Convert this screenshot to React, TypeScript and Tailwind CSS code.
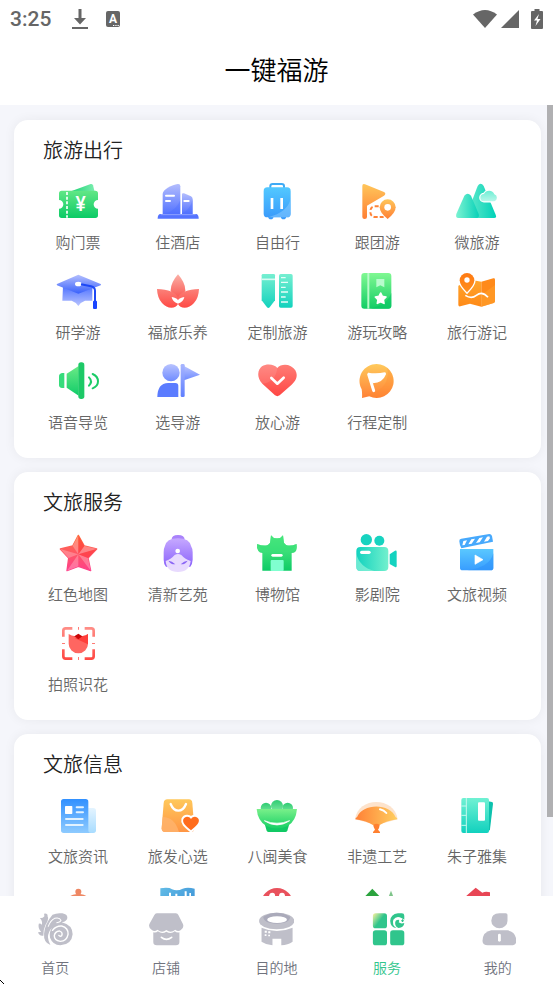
import type { ReactNode } from "react";

type GradProps = { id: string; from: string; to: string; dir?: "down" | "right" | "diag" };

function Grad({ id, from, to, dir = "down" }: GradProps) {
  return (
    <linearGradient id={id} x1="0" y1="0" x2={dir === "down" ? "0" : "1"} y2={dir === "right" ? "0" : "1"}>
      <stop offset="0" stopColor={from} />
      <stop offset="1" stopColor={to} />
    </linearGradient>
  );
}

function Icon({ box, children }: { box: string; children: ReactNode }) {
  return (
    <svg viewBox={box} className="h-10 w-12" fill="none" aria-hidden="true">
      {children}
    </svg>
  );
}

const ticket = (
  <Icon box="69 21 144 120">
    <Grad id="tk" from="#62e786" to="#0bcb66" />
    <Grad id="tkb" from="#0fce6c" to="#7deeb0" dir="right" />
    <path d="M112 52L179 27q5-1 7 4l6 24z" fill="url(#tkb)" />
    <path d="M92 47H193a8 8 0 0 1 8 8V75a13 13 0 0 0 0 26V121a8 8 0 0 1-8 8H92a8 8 0 0 1-8-8V101a13 13 0 0 0 0-26V55a8 8 0 0 1 8-8z" fill="url(#tk)" />
    <path d="M108 51V128" stroke="#fff" strokeWidth="5" strokeDasharray="9 5" />
    <text x="149" y="108" textAnchor="middle" fontSize="58" fontWeight="500" fontFamily="Roboto, sans-serif" fill="#fff">¥</text>
  </Icon>
);

const hotel = (
  <Icon box="370 21 144 120">
    <Grad id="ho" from="#b3bdfd" to="#5473ff" />
    <path d="M396 117V57C396 42 425 30 441 27q8-1 8 7V117z" fill="url(#ho)" />
    <path d="M454 58q0-5 6-3l21 9q5 3 5 8V117H454z" fill="url(#ho)" />
    <path d="M449 74Q440 104 402 117H449z M486 72Q480 102 454 116V117H486z" fill="#4b6cff" opacity=".35" />
    <path d="M388 117H497q7 2 7 14H381q0-12 7-14z" fill="#5573ff" />
    <path d="M390 119H495" stroke="#8fa2ff" strokeWidth="3" />
    <path d="M406 62H430M406 78H418M461 78H474" stroke="#fff" strokeWidth="6" strokeLinecap="round" />
  </Icon>
);

const suitcase = (
  <Icon box="670 21 144 120">
    <Grad id="su" from="#52c8ff" to="#3a9bfb" />
    <path d="M722 40V33q0-6 7-6H756q7 0 7 6V40" stroke="#3eaaf5" strokeWidth="6" />
    <path d="M716 124h15v5l-4 4h-7l-4-4zM754 124h15v5l-4 4h-7l-4-4z" fill="#3a9bfb" />
    <rect x="702" y="37" width="81" height="90" rx="11" fill="url(#su)" />
    <path d="M783 70Q775 112 715 127H772q11 0 11-11z" fill="#86cbff" opacity=".55" />
    <path d="M727 69V102M756 69V102" stroke="#fff" strokeWidth="8" />
  </Icon>
);

const groupTour = (
  <Icon box="191 21 144 120">
    <Grad id="gt" from="#ffc65a" to="#ff7f34" />
    <path d="M219 33q0-8 8-5L284 51q8 5 0 11L233 92V126q0 6-7 6t-7-6z" fill="url(#gt)" />
    <path d="M268 94H256q-13 1-13 16t15 16H296" stroke="#ff8236" strokeWidth="6" strokeDasharray="12 6" />
    <path d="M295 132Q271 113 271 97a24 24 0 0 1 48 0Q319 113 295 132z" fill="url(#gt)" stroke="#fff" strokeWidth="5" paintOrder="stroke" />
    <circle cx="295" cy="97" r="10" fill="#fff" />
  </Icon>
);

const mountains = (
  <Icon box="492 21 144 120">
    <Grad id="mo1" from="#55e6c8" to="#00d1b8" dir="right" />
    <Grad id="mo2" from="#7cf3d2" to="#08d1b8" dir="right" />
    <Grad id="mo3" from="#6feed4" to="#b8f7ea" />
    <path d="M548 80L566 33q9-13 18 0L620 119q4 10-5 10H550z" fill="url(#mo1)" />
    <path d="M502 117L526 62q10-12 20 0L569 117q3 12-7 12H508q-9 0-6-12z" fill="url(#mo2)" />
    <path d="M585 79a11 11 0 0 1 0-22a17 17 0 0 1 31 1a11 11 0 0 1 0 21z" fill="url(#mo3)" stroke="#fff" strokeWidth="7" paintOrder="stroke" />
  </Icon>
);

const gradCap = (
  <Icon box="69 21 144 120">
    <Grad id="gc1" from="#b4bffe" to="#3961fb" />
    <Grad id="gc2" from="#4f73ff" to="#b9c4ff" />
    <path d="M96 64L94 107H122Q136 112 142 123Q148 112 162 107H184V64z" fill="url(#gc2)" />
    <path d="M78 57L142 29L209 57q2 2 0 4L146 85q-4 2-8 0L78 61q-2-2 0-4z" fill="url(#gc1)" />
    <ellipse cx="142" cy="57" rx="10" ry="7" fill="#fff" />
    <path d="M150 58L180 64Q192 67 192 77V110" stroke="#1d48f5" strokeWidth="6" />
    <rect x="186" y="107" width="12" height="25" rx="3" fill="#1a45ff" />
  </Icon>
);

const lotus = (
  <Icon box="370 21 144 120">
    <Grad id="lo1" from="#fb8179" to="#ff4a45" />
    <Grad id="lo2" from="#fbb0a6" to="#f9504b" />
    <path d="M442 28Q420 53 420 76Q426 100 442 106Q458 100 464 76Q464 53 442 28z" fill="url(#lo2)" />
    <path d="M379 72C412 72 438 84 442 98C446 84 472 72 505 72Q504 99 490 114C475 133 448 132 442 117C436 132 409 133 394 114Q380 99 379 72z" fill="url(#lo1)" />
    <path d="M423 96Q438 98 442 106Q446 98 461 96Q459 110 442 116Q425 110 423 96z" fill="#fff" />
  </Icon>
);

const penRuler = (
  <Icon box="670 21 144 120">
    <Grad id="pr" from="#76efd1" to="#12d2bd" />
    <path d="M696 31q0-4 4-4H732q4 0 4 4V106L720 127q-4 4-8 0L696 106z" fill="url(#pr)" />
    <path d="M696 43H736" stroke="#d6fbf2" strokeWidth="5" />
    <rect x="748" y="27" width="41" height="101" rx="5" fill="url(#pr)" />
    <path d="M754 38H768M754 52H775M754 67H768M754 81H775M754 96H768M754 111H775" stroke="#e6fdf8" strokeWidth="4" />
  </Icon>
);

const guideBook = (
  <Icon box="191 21 144 120">
    <Grad id="gb" from="#80f892" to="#12cd65" />
    <rect x="216" y="24" width="90" height="107" rx="9" fill="url(#gb)" />
    <path d="M306 84Q294 118 243 131H297q9 0 9-9z" fill="#08c764" opacity=".6" />
    <path d="M237 24V131" stroke="#b7fbc8" strokeWidth="6" />
    <path d="M261 42H285V67L273 61L261 67z" fill="#b9fbcd" />
    <path d="M274 84L279 94L290 96L282 104L284 115L274 110L264 115L266 104L258 96L269 94z" fill="#fff" stroke="#fff" strokeWidth="5" strokeLinejoin="round" />
  </Icon>
);

const travelMap = (
  <Icon box="492 21 144 120">
    <Grad id="tm" from="#ffa62d" to="#ff8a17" />
    <Grad id="tmp" from="#ff7a12" to="#ff8f1d" />
    <path d="M508 62L545 44L577 50V125L543 116L514 124q-6 1-6-5z" fill="url(#tm)" />
    <path d="M577 50L613 40q5-1 5 4V109q0 4-4 5L577 125z" fill="#ff8a1a" />
    <path d="M577 90L618 60V109q0 4-4 5L577 125z" fill="#ff9c2a" opacity=".7" />
    <path d="M534 82Q512 60 512 46a22 22 0 0 1 44 0Q556 60 534 82z" fill="url(#tmp)" stroke="#fff" strokeWidth="8" paintOrder="stroke" />
    <circle cx="534" cy="45" r="8" fill="#fff" />
    <path d="M529 91Q547 103 562 91Q580 77 597 97" stroke="#fff" strokeWidth="5" />
  </Icon>
);

const speaker = (
  <Icon box="69 21 144 120">
    <Grad id="sp" from="#6bea86" to="#10cc69" />
    <path d="M100 54H93q-9 2-9 10V90q0 8 9 9H100z" fill="#35dc7b" />
    <path d="M107 56L143 33V122L107 98z" fill="url(#sp)" />
    <rect x="142" y="22" width="18" height="110" rx="8" fill="#1dc967" />
    <path d="M174 67Q186 79 174 92M185 57Q201 64 201 79T185 100" stroke="#1ccc68" strokeWidth="6" strokeLinecap="round" />
  </Icon>
);

const tourGuide = (
  <Icon box="370 21 144 120">
    <Grad id="tg" from="#b8c3ff" to="#6f8bff" />
    <Grad id="tgf" from="#a8b6ff" to="#5f7fff" />
    <circle cx="421" cy="53" r="26" fill="url(#tg)" />
    <path d="M380 126C380 101 390 84 413 84H434q9 0 9 9V126z" fill="#5b7cff" />
    <path d="M460 33L508 59L460 76z" fill="url(#tg)" />
    <rect x="450" y="27" width="12" height="99" rx="4" fill="url(#tgf)" />
  </Icon>
);

const heart = (
  <Icon box="670 21 144 120">
    <Grad id="he" from="#ff7d76" to="#ff4744" />
    <path d="M743 39C755 24 785 26 797 46C808 66 795 81 785 90L750 121q-7 5-14 0L698 86C680 68 684 44 697 34C712 24 735 28 743 39z" fill="url(#he)" />
    <path d="M743 39C735 28 712 24 697 34C684 44 680 68 698 86Q738 82 743 39z" fill="#fff" opacity=".1" />
    <path d="M725 69L743 86L762 68" stroke="#fff" strokeWidth="8" strokeLinecap="round" strokeLinejoin="round" />
  </Icon>
);

const itinerary = (
  <Icon box="971 21 144 120">
    <Grad id="it" from="#ffca5c" to="#ff8136" />
    <path d="M1042 27a51 51 0 1 1-22 97L998 129q1-14-1-26A51 51 0 0 1 1042 27z" fill="url(#it)" />
    <path d="M1074 39Q1084 104 1010 119L1020 124A51 51 0 0 0 1074 39z" fill="#ff8a30" opacity=".3" />
    <path d="M1018 58L1033 107" stroke="#fff" strokeWidth="9" strokeLinecap="round" />
    <path d="M1016 53Q1042 57 1066 52Q1071 52 1070 58Q1060 84 1031 85L1026 80L1018 60z" fill="#fff" />
  </Icon>
);

const redStar = (
  <Icon box="69 27 144 120">
    <Grad id="rs" from="#ff6f3f" to="#ff3f8a" />
    <path d="M142 31L160 63L197 72L171 99L179 137L142 124L108 137L113 99L88 72L125 63z" fill="url(#rs)" stroke="url(#rs)" strokeWidth="4" strokeLinejoin="round" />
    <path d="M142 88V31L125 63zM142 88L88 72L113 99zM142 88L108 137L142 124zM142 88L179 137L171 99zM142 88L197 72L160 63z" fill="#fff" opacity=".25" />
    <path d="M142 88L197 72L171 99zM142 88V31L160 63z" fill="#ff2222" opacity=".35" />
  </Icon>
);

const artGarden = (
  <Icon box="370 27 144 120">
    <Grad id="ag" from="#c6a9ff" to="#8b63fb" />
    <path d="M423 45Q422 30 442 30T462 45z" fill="#a982fb" />
    <path d="M402 65Q407 40 442 40T482 65Q486 70 486 82V104Q485 118 479 125H406Q399 118 399 104V82Q399 70 402 65z" fill="url(#ag)" />
    <path d="M405 108Q420 104 432 90Q442 84 452 90Q464 104 480 108Q476 141 442 141T405 108z" fill="#e8dafe" />
    <path d="M413 107Q424 108 434 118Q420 119 413 107zM471 107Q460 108 450 118Q464 119 471 107z" fill="#8b66f5" />
    <circle cx="441" cy="78" r="7" fill="#fff" />
  </Icon>
);

const museum = (
  <Icon box="670 27 144 120">
    <Grad id="mu" from="#62ef87" to="#0dcb66" />
    <path d="M724 31Q731 41 742 40Q753 41 760 31L763 53Q772 68 801 57Q804 72 797 80Q793 84 786 84V137H698V84Q690 84 686 78Q680 70 682 57Q712 68 721 53z" fill="url(#mu)" />
    <path d="M724 31Q731 41 742 40Q753 41 760 31L763 53Q772 68 801 57Q790 82 758 76H726Q694 82 682 57Q712 68 721 53z" fill="#36df77" opacity=".6" />
    <path d="M729 91H755" stroke="#fff" strokeWidth="8" strokeLinecap="round" />
    <rect x="723" y="105" width="39" height="33" rx="3" fill="#80ffd0" />
  </Icon>
);

const cinema = (
  <Icon box="191 27 144 120">
    <Grad id="ci" from="#12d2bf" to="#72f0cd" dir="right" />
    <circle cx="231" cy="44" r="17" fill="#17d3c0" />
    <circle cx="270" cy="47" r="15" fill="#17d3c0" />
    <rect x="201" y="66" width="96" height="72" rx="12" fill="url(#ci)" />
    <path d="M201 86Q210 125 255 138H213q-12 0-12-12z" fill="#8ff3da" opacity=".7" />
    <path d="M301 88L317 77q5-2 5 3V123q0 5-5 3L301 117z" fill="#14d3c0" />
    <path d="M217 82H239" stroke="#fff" strokeWidth="10" strokeLinecap="round" />
  </Icon>
);

const video = (
  <Icon box="492 27 144 120">
    <Grad id="vi" from="#5ac8ff" to="#389dff" />
    <path d="M511 49q-1-7 6-8L601 27q6 0 8 6L612 50L517 70q-5-8-6-21z" fill="#47a9fc" />
    <path d="M523 48L534 46L527 60L520 61zM547 43L558 41L548 56L538 58zM571 39L582 37L572 52L561 54zM594 35L601 34L603 40L597 48L585 50z" fill="#fff" />
    <path d="M513 72H613V128q0 8-8 8H521q-8 0-8-8z" fill="url(#vi)" />
    <path d="M613 85Q602 128 535 136H605q8 0 8-8z" fill="#2b90fa" opacity=".5" />
    <path d="M558 90L582 104L558 118z" fill="#fff" stroke="#fff" strokeWidth="2" strokeLinejoin="round" />
  </Icon>
);

const flowerScan = (
  <Icon box="159 42 144 120">
    <linearGradient id="fl" gradientUnits="userSpaceOnUse" x1="0" y1="50" x2="0" y2="150">
      <stop offset="0" stopColor="#ff8f88" />
      <stop offset="1" stopColor="#ff4742" />
    </linearGradient>
    <path d="M187 80V62q0-7 7-7H214M251 55H271q7 0 7 7V80M278 118V139q0 7-7 7H251M214 146H194q-7 0-7-7V118" stroke="url(#fl)" strokeWidth="8" />
    <path d="M231 51h3v8h-3zM231 141h3v9h-3zM183 99h9v3h-9zM273 99h9v3h-9z" fill="#ff7a74" />
    <path d="M203 72Q214 79 222 78L232 86L243 78Q252 79 261 72V101a29 29 0 0 1-58 0z" fill="#ff6661" />
    <path d="M222 85L243 78Q252 79 261 72V103z" fill="#ff3f3b" />
    <path d="M220 79L232 71L244 79L232 88z" fill="#c90606" />
  </Icon>
);

const news = (
  <Icon box="69 33 144 120">
    <Grad id="ne" from="#3190ff" to="#8ecbff" />
    <Grad id="neb" from="#e4f4ff" to="#a8dcff" />
    <path d="M168 69H187q8 0 8 8V136q0 8-8 8H160z" fill="url(#neb)" />
    <path d="M98 42H164q8 0 8 8V135q0 9 8 9H98q-8 0-8-8V50q0-8 8-8z" fill="url(#ne)" />
    <rect x="102" y="63" width="22" height="24" rx="2" fill="#fff" />
    <path d="M137 67H156M137 82H156M105 102H155M105 120H155" stroke="#e2f2ff" strokeWidth="6" strokeLinecap="round" />
  </Icon>
);

const shoppingBag = (
  <Icon box="370 33 144 120">
    <Grad id="sb" from="#ffc85b" to="#ff9544" />
    <path d="M399 54q1-11 11-11H475q9 0 10 11L491 130q0 11-10 11H403q-10 0-10-11z" fill="url(#sb)" />
    <path d="M396 96Q432 96 445 141H403q-10 0-10-11z" fill="#ffb46e" opacity=".8" />
    <path d="M420 57Q428 77 443 77T466 57" stroke="#fff" strokeWidth="7" strokeLinecap="round" />
    <path d="M481 102C487 92 500 93 504 103C507 114 499 121 481 136C463 121 455 114 458 103C462 93 475 92 481 102z" fill="#ff6c1c" stroke="#fff" strokeWidth="12" strokeLinejoin="round" paintOrder="stroke" />
  </Icon>
);

const bowl = (
  <Icon box="670 33 144 120">
    <Grad id="bo" from="#79f08a" to="#18d066" />
    <Grad id="bop" from="#2ecb72" to="#7deaa0" />
    <circle cx="709" cy="69" r="16" fill="url(#bop)" />
    <circle cx="774" cy="69" r="16" fill="url(#bop)" />
    <circle cx="742" cy="63" r="18" fill="url(#bop)" />
    <path d="M706 120H778L773 137q-2 4-6 4H717q-4 0-6-4z" fill="#11c964" />
    <path d="M681 72H802Q799 108 774 123Q742 138 710 123Q684 108 681 72z" fill="url(#bo)" />
    <path d="M704 107Q742 133 780 107Q742 122 704 107z" fill="#fff" stroke="#fff" strokeWidth="2" />
  </Icon>
);

const fan = (
  <Icon box="191 33 144 120">
    <Grad id="fa" from="#ff8036" to="#ffcf60" dir="right" />
    <path d="M197 103C206 34 316 34 325 103L262 120z" fill="#fde3cc" />
    <path d="M198 103Q199 97 203 97C220 54 302 54 319 97Q323 97 324 103Q290 108 270 121H252Q232 108 198 103z" fill="url(#fa)" />
    <path d="M252 120Q262 112 271 120Q270 130 266 134L272 141V144H251V141L257 134Q252 128 252 120z" fill="#ff8030" />
    <path d="M272 73Q284 75 291 84" stroke="#fff" strokeWidth="6" strokeLinecap="round" />
  </Icon>
);

const notebook = (
  <Icon box="492 33 144 120">
    <Grad id="nb" from="#70f1d3" to="#11d1be" />
    <path d="M594 48L609 51q3 1 3 5L603 133q-1 5-6 6z" fill="#0dc2ae" />
    <rect x="517" y="39" width="83" height="105" rx="6" fill="url(#nb)" />
    <path d="M532 39V144M517 63H532M517 91H532M517 121H532" stroke="#c5f9ee" strokeWidth="3" />
    <rect x="567" y="52" width="21" height="55" rx="3" fill="#fff" />
  </Icon>
);

const massage = (
  <Icon box="69 303 144 120">
    <circle cx="142" cy="320" r="9" fill="#ee8763" />
    <path d="M138 324H147V327Q160 328 166 333V410H118V333Q124 328 138 327z" fill="#ee8763" />
  </Icon>
);

const cityMap = (
  <Icon box="370 303 144 120">
    <Grad id="cm" from="#62bbe6" to="#3287d2" dir="diag" />
    <path d="M389 310Q415 306 424 313Q440 320 456 311Q470 305 492 311V410H389z" fill="url(#cm)" />
    <path d="M415 333V323h6v10zM434 333V326h6v7zM462 333V319h6v14zM476 333V324h5v9z" fill="#fff" />
  </Icon>
);

const opera = (
  <Icon box="670 303 144 120">
    <circle cx="742" cy="357" r="48" fill="#e9515c" />
    <path d="M718 336q0-13 10-13t8 13zM748 336q-1-13 9-13t9 13z" fill="#fff" />
  </Icon>
);

const forest = (
  <Icon box="191 303 144 120">
    <path d="M249 311L300 365H198z" fill="#2ba33e" />
    <path d="M305 317L320 355H290z" fill="#7fc48a" />
  </Icon>
);

const village = (
  <Icon box="492 303 144 120">
    <path d="M560 308L574 319L580 323Q590 318 603 322V345H518z" fill="#e84655" />
  </Icon>
);

type Entry = { label?: string; icon: ReactNode };

const sections: { title: string; items: Entry[] }[] = [
  {
    title: "旅游出行",
    items: [
      { label: "购门票", icon: ticket },
      { label: "住酒店", icon: hotel },
      { label: "自由行", icon: suitcase },
      { label: "跟团游", icon: groupTour },
      { label: "微旅游", icon: mountains },
      { label: "研学游", icon: gradCap },
      { label: "福旅乐养", icon: lotus },
      { label: "定制旅游", icon: penRuler },
      { label: "游玩攻略", icon: guideBook },
      { label: "旅行游记", icon: travelMap },
      { label: "语音导览", icon: speaker },
      { label: "选导游", icon: tourGuide },
      { label: "放心游", icon: heart },
      { label: "行程定制", icon: itinerary },
    ],
  },
  {
    title: "文旅服务",
    items: [
      { label: "红色地图", icon: redStar },
      { label: "清新艺苑", icon: artGarden },
      { label: "博物馆", icon: museum },
      { label: "影剧院", icon: cinema },
      { label: "文旅视频", icon: video },
      { label: "拍照识花", icon: flowerScan },
    ],
  },
  {
    title: "文旅信息",
    items: [
      { label: "文旅资讯", icon: news },
      { label: "旅发心选", icon: shoppingBag },
      { label: "八闽美食", icon: bowl },
      { label: "非遗工艺", icon: fan },
      { label: "朱子雅集", icon: notebook },
      { icon: massage },
      { icon: cityMap },
      { icon: opera },
      { icon: forest },
      { icon: village },
    ],
  },
];

function NavIcon({ box, children }: { box: string; children: ReactNode }) {
  return (
    <svg viewBox={box} preserveAspectRatio="none" className="h-[34px] w-9" fill="none" aria-hidden="true">
      {children}
    </svg>
  );
}

const tabs: { label: string; active?: boolean; icon: ReactNode }[] = [
  {
    label: "首页",
    icon: (
      <NavIcon box="106 65 102 102">
        <path d="M126 70Q137 68 136 78Q140 84 136 92L130 104Q124 116 124 136Q112 138 109 126Q112 124 118 125Q108 114 111 100Q118 98 120 104Q122 90 114 84Q124 84 127 78z" fill="#bfbfc9" />
        <path d="M150 73Q162 67 178 69Q192 72 192 82Q192 92 176 96Q207 104 207 132Q204 164 172 165Q150 163 143 142Q140 126 148 112Q138 124 137 140Q138 154 144 164Q124 156 126 130Q128 100 150 73z" fill="#bfbfc9" />
        <path d="M138 108Q144 90 156 84Q170 80 174 90Q172 96 162 97" stroke="#fff" strokeWidth="3" strokeLinecap="round" />
        <path d="M150 120Q160 106 176 107Q195 112 194 132Q190 153 172 153Q155 150 155 136Q157 123 170 122Q180 126 176 136Q172 140 168 135" stroke="#fff" strokeWidth="4" strokeLinecap="round" />
      </NavIcon>
    ),
  },
  {
    label: "店铺",
    icon: (
      <NavIcon box="419 65 102 102">
        <path d="M444 69H498q5 0 7 5L518 101Q522 112 512 119Q505 126 496 118Q484 130 471 119Q458 130 446 118Q437 126 430 119Q419 112 423 101L437 74q2-5 7-5z" fill="#bfbfc9" />
        <path d="M434 126Q442 128 447 123Q459 132 471 124Q484 132 495 123Q501 128 508 126V155q0 10-10 10H444q-10 0-10-10z" fill="#bfbfc9" />
        <path d="M457 141Q471 153 486 141" stroke="#fff" strokeWidth="5" strokeLinecap="round" />
      </NavIcon>
    ),
  },
  {
    label: "目的地",
    icon: (
      <NavIcon box="733 65 102 102">
        <path d="M743 112Q786 132 831 112V154Q818 164 799 165V145H774V165Q755 163 743 154z" fill="#bfbfc9" />
        <ellipse cx="786" cy="92" rx="50" ry="25" fill="#bfbfc9" />
        <path d="M748 79Q786 55 824 79Q824 98 786 100Q748 98 748 79z" fill="#aaaaba" />
        <ellipse cx="787" cy="88" rx="28" ry="10" fill="#fff" />
        <path d="M752 121h6v6h-6zM762 123h6v6h-6zM752 132h5v5h-5zM762 133h5v5h-5z" fill="#fff" />
      </NavIcon>
    ),
  },
  {
    label: "服务",
    active: true,
    icon: (
      <NavIcon box="1046 65 102 102">
        <linearGradient id="sv" x1="0" y1="0" x2="1" y2="0.8">
          <stop offset="0" stopColor="#fff3a0" />
          <stop offset=".55" stopColor="#30c58c" />
        </linearGradient>
        <rect x="1057" y="69" width="40" height="45" rx="8" fill="url(#sv)" />
        <rect x="1057" y="120" width="40" height="45" rx="8" fill="#30c58c" />
        <rect x="1106" y="120" width="40" height="45" rx="8" fill="#30c58c" />
        <path d="M1128 69H1139q7 0 7 7V88L1138 83Q1124 75 1115 88Q1110 104 1124 113Q1107 112 1106 92Q1107 72 1128 69z" fill="#30c58c" />
        <path d="M1120 98Q1120 88 1130 88Q1134 92 1130 96Q1136 101 1146 98Q1145 112 1130 113Q1120 110 1120 98z" fill="#30c58c" />
        <path d="M1137 91h8M1141 87v8" stroke="#30c58c" strokeWidth="3" />
      </NavIcon>
    ),
  },
  {
    label: "我的",
    icon: (
      <NavIcon box="1360 65 102 102">
        <path d="M1415 69H1433q5 0 5 5V91a23 23 0 0 1-46 0Q1392 70 1415 69z" fill="#bfbfc9" />
        <path d="M1392 120H1438Q1462 124 1463 152Q1462 165 1448 165H1382Q1368 165 1367 152Q1368 124 1392 120z" fill="#bfbfc9" />
        <path d="M1415 134V150" stroke="#fff" strokeWidth="8" strokeLinecap="round" />
      </NavIcon>
    ),
  },
];

function StatusBar() {
  return (
    <div className="flex h-[38px] items-center justify-between px-[10px] text-[#666]">
      <div className="flex items-center">
        <span className="w-[62px] font-[Roboto,sans-serif] text-[21px] font-medium leading-6">3:25</span>
        <svg viewBox="0 0 16 20" className="h-5 w-4" fill="currentColor" aria-hidden="true">
          <path d="M6.500 0h3v9h4.500L8 15.500 2 9h4.500zM0 18h16v2H0z" />
        </svg>
        <svg viewBox="0 0 14 16" className="ml-[18px] h-4 w-[14px]" aria-hidden="true">
          <rect width="14" height="16" rx="2" fill="currentColor" />
          <text x="7" y="12" textAnchor="middle" fontSize="12" fontWeight="700" fontFamily="Roboto, sans-serif" fill="#fff">A</text>
          <path d="M7 14h1.300v1H7zM9.300 14h1.300v1H9.300zM11.500 14h1.300v1h-1.300z" fill="#fff" />
        </svg>
      </div>
      <div className="flex items-center">
        <svg viewBox="0 0 24 18" className="h-[18px] w-6" fill="currentColor" aria-hidden="true">
          <path d="M0 4.500Q12-4.500 24 4.500L12 18z" />
        </svg>
        <svg viewBox="0 0 18 18" className="ml-1 size-[18px]" fill="currentColor" aria-hidden="true">
          <path d="M18 0V18H0z" />
        </svg>
        <svg viewBox="0 0 12 20" className="ml-3 h-5 w-3" aria-hidden="true">
          <path d="M3.500 0h5v2H11q1 0 1 1V19q0 1-1 1H1q-1 0-1-1V3q0-1 1-1h2.500z" fill="currentColor" />
          <path d="M8 5L3 11.500H6L4.500 17L9.500 10H6.500z" fill="#fff" />
        </svg>
      </div>
    </div>
  );
}

export default function App() {
  return (
    <div className="relative flex h-screen flex-col bg-white font-['Noto_Sans_CJK_SC',sans-serif] font-[350]">
      <header className="pb-[7px]">
        <StatusBar />
        <h1 className="flex h-[60px] items-center justify-center text-[26px] font-[350] text-black">一键福游</h1>
      </header>

      <div className="relative min-h-0 flex-1 bg-[#f5f6fb]">
        <main className="flex h-full flex-col gap-[14px] overflow-y-auto pt-[15px] pr-3 pl-[14px] [scrollbar-width:none]">
          {sections.map((section) => (
            <section
              key={section.title}
              className="shrink-0 rounded-[14px] bg-white px-[14px] pt-[15px] pb-[6px] shadow-[0_0_12px_rgba(0,0,0,0.06)]"
            >
              <h2 className="mb-[17px] pl-[15px] text-[20px] leading-[30px] font-[350] text-[#222]">{section.title}</h2>
              <div className="grid grid-cols-5">
                {section.items.map((item, i) => (
                  <button key={i} type="button" className="flex flex-col items-center gap-[10px] pb-5">
                    {item.icon}
                    <span className="h-5 text-[15px] leading-5 whitespace-nowrap text-[#666]">{item.label}</span>
                  </button>
                ))}
              </div>
            </section>
          ))}
        </main>
        <div className="absolute top-0 right-0 h-[90%] w-[6px] bg-[#b0b0b2]" />
      </div>

      <nav className="grid grid-cols-5 bg-white pt-4 pb-[7px]">
        {tabs.map((tab) => (
          <button
            key={tab.label}
            type="button"
            aria-current={tab.active ? "page" : undefined}
            className={`flex flex-col items-center gap-[11px] text-[14px] leading-5 ${tab.active ? "text-[#30c58c]" : "text-[#70737d]"}`}
          >
            {tab.icon}
            <span>{tab.label}</span>
          </button>
        ))}
      </nav>

      <svg viewBox="0 0 4 4" className="absolute bottom-0 left-0 size-1" aria-hidden="true">
        <path d="M0 0h1v1H0zM1 1h1v1H1zM2 2h1v1H2zM3 3h1v1H3z" fill="#000" />
      </svg>
    </div>
  );
}
